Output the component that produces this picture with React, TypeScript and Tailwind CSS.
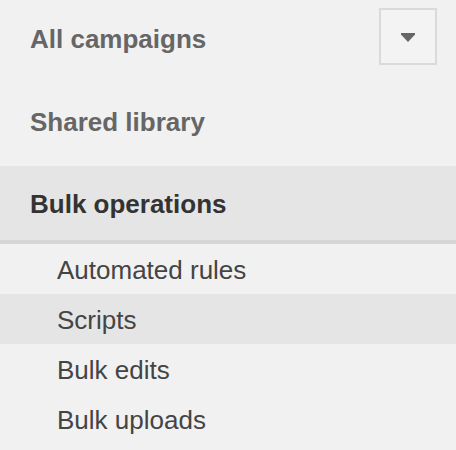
const subItems = [
  { label: "Automated rules", active: false },
  { label: "Scripts", active: true },
  { label: "Bulk edits", active: false },
  { label: "Bulk uploads", active: false },
];

export default function App() {
  return (
    <div className="w-[456px] h-[450px] overflow-hidden bg-[#f1f1f1] font-['Liberation_Sans',Arial,sans-serif]">
      {/* Top nav */}
      <div className="flex items-center justify-between h-[74px] pl-[30px] pr-[19px]">
        <span className="text-[26px] leading-[30px] font-bold text-[#666] pt-[4px]">All campaigns</span>
        <button className="w-[58px] h-[57px] border-2 border-[#dadada] bg-[#f3f3f3] flex items-center justify-center mt-[-2px]">
          <svg width="14" height="9" viewBox="0 0 14 9" className="mt-[2px]">
            <path d="M0 0 H14 V1.5 L7 9 L0 1.5 Z" fill="#666" />
          </svg>
        </button>
      </div>
      <div className="flex items-center h-[92px] pl-[30px]">
        <span className="text-[26px] leading-[30px] font-bold text-[#666] pt-[4px]">Shared library</span>
      </div>

      {/* Active section */}
      <div className="flex items-center h-[78px] pl-[30px] bg-[#e5e5e5] border-b-4 border-[#d6d6d6]">
        <span className="text-[26px] leading-[30px] font-bold text-[#333] pt-[1px]">Bulk operations</span>
      </div>

      <div className="flex flex-col">
        {subItems.map((item) => (
          <div
            key={item.label}
            className={`flex items-center pl-[57px] h-[50px] ${item.active ? "bg-[#e5e5e5]" : ""}`}
          >
            <span className="text-[26px] leading-[30px] text-[#444] pt-[1px]">{item.label}</span>
          </div>
        ))}
      </div>
    </div>
  );
}
